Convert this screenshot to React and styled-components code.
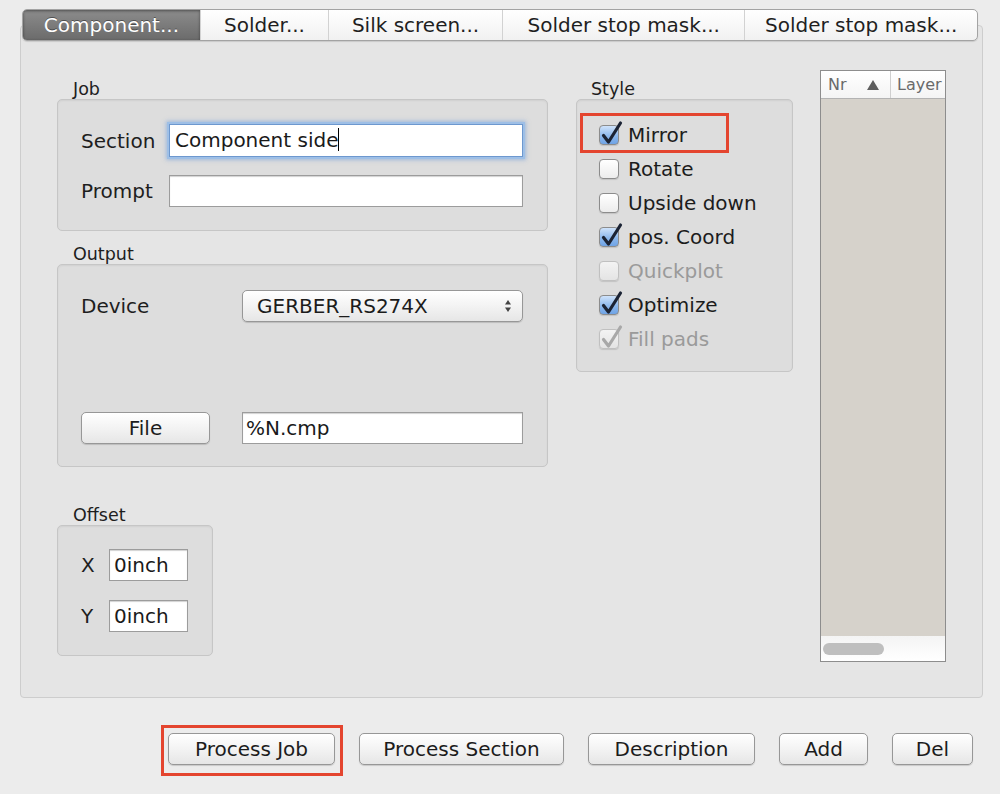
import React from "react"
import styled, { createGlobalStyle, css } from "styled-components"

const GlobalStyle = createGlobalStyle`
  html, body {
    margin: 0;
    padding: 0;
    background: #ececec;
  }
  body {
    font-family: "DejaVu Sans", "Liberation Sans", sans-serif;
    color: #1a1a1a;
  }
`

const Window = styled.div`
  width: 1000px;
  height: 794px;
  box-sizing: border-box;
  padding: 9px 17px 0 20px;
  overflow: hidden;
`

const TabBar = styled.div`
  position: relative;
  z-index: 1;
  display: flex;
  height: 32px;
  margin: 0 5px 0 2px;
  box-sizing: border-box;
  border: 1px solid #a3a3a3;
  border-radius: 5px;
  overflow: hidden;
  background: linear-gradient(#ffffff, #f1f1f1);
  box-shadow: 0 1px 1px rgba(0, 0, 0, 0.12);
`

const Tab = styled.div`
  width: ${p => p.$w}px;
  display: flex;
  align-items: center;
  justify-content: center;
  font-size: 20px;
  color: #1f1f1f;
  position: relative;
  ${p => p.$active && css`
    background: linear-gradient(#8c8c8c, #6b6b6b);
    color: #ffffff;
    text-shadow: 0 -1px 0 rgba(0, 0, 0, 0.4);
    box-shadow: inset 0 1px 3px rgba(0, 0, 0, 0.45);
  `}
  & + & {
    border-left: 1px solid #d2d2d2;
  }
`

const Panel = styled.div`
  margin-top: -16px;
  width: 963px;
  height: 673px;
  box-sizing: border-box;
  border: 1px solid #cdcdcd;
  border-radius: 4px;
  background: #e5e5e5;
  display: flex;
  align-items: flex-start;
  padding: 44px 0 0 36px;
`

const LeftColumn = styled.div`
  width: 491px;
  margin-top: 9px;
  display: flex;
  flex-direction: column;
`

const Group = styled.div`
  margin-top: ${p => p.$top || 0}px;
`

const GroupLabel = styled.div`
  font-size: 17.5px;
  line-height: 20px;
  height: 20px;
  padding-left: ${p => p.$indent || 16}px;
  color: #1e1e1e;
`

const GroupBox = styled.div`
  box-sizing: border-box;
  width: ${p => p.$w ? `${p.$w}px` : "100%"};
  height: ${p => p.$h}px;
  border: 1px solid #c6c6c6;
  border-radius: 5px;
  background: #dddddd;
  box-shadow: inset 0 1px 2px rgba(0, 0, 0, 0.06);
`

const JobBox = styled(GroupBox)`
  display: grid;
  grid-template-columns: 88px 1fr;
  row-gap: 18px;
  align-items: center;
  align-content: start;
  padding: 24px 24px 0 23px;
`

const OutputBox = styled(GroupBox)`
  display: grid;
  grid-template-columns: 161px 1fr;
  row-gap: 90px;
  align-items: center;
  align-content: start;
  padding: 25px 24px 0 23px;
`

const OffsetBox = styled(GroupBox)`
  display: grid;
  grid-template-columns: 28px 79px;
  row-gap: 19px;
  align-items: center;
  align-content: start;
  padding: 23px 0 0 23px;
`

const Label = styled.div`
  font-size: 20px;
  color: #1e1e1e;
`

const Field = styled.div`
  box-sizing: border-box;
  height: ${p => p.$h || 32}px;
  background: #ffffff;
  border: 1px solid #9c9c9c;
  box-shadow: inset 0 1px 1px rgba(0, 0, 0, 0.18);
  font-size: 20px;
  line-height: ${p => (p.$h || 32) - 2}px;
  padding-left: ${p => p.$pad || 5}px;
  white-space: nowrap;
  overflow: hidden;
  ${p => p.$focused && css`
    border-color: #6d98cf;
    box-shadow: 0 0 0 2px #9ebfe6, 0 0 4px 3px rgba(110, 155, 215, 0.55);
  `}
`

const Caret = styled.span`
  display: inline-block;
  width: 1px;
  height: 23px;
  background: #000;
  vertical-align: -4px;
`

const PushButton = styled.div`
  box-sizing: border-box;
  height: 32px;
  width: ${p => p.$w}px;
  border: 1px solid #979797;
  border-radius: 5px;
  background: linear-gradient(#ffffff, #f3f3f3 50%, #e6e6e6);
  box-shadow: 0 1px 1px rgba(0, 0, 0, 0.15);
  display: flex;
  align-items: center;
  justify-content: center;
  font-size: 20px;
  color: #1c1c1c;
`

const Select = styled(PushButton)`
  width: 100%;
  justify-content: space-between;
  padding: 0 10px 0 14px;
`

const StyleColumn = styled.div`
  width: 217px;
  margin: 9px 0 0 28px;
`

const StyleBox = styled(GroupBox)`
  padding: 18px 0 0 22px;
`

const CheckRow = styled.div`
  position: relative;
  height: 34px;
  display: flex;
  align-items: center;
  gap: 9px;
  font-size: 20px;
  color: ${p => p.$disabled ? "#9a9a9a" : "#1c1c1c"};
`

const Box = styled.span`
  position: relative;
  width: 20px;
  height: 20px;
  box-sizing: border-box;
  border-radius: 4px;
  border: 1px solid ${p => p.$disabled ? "#c0c0c0" : "#8c8c8c"};
  background: ${p => p.$checked && !p.$disabled
    ? "linear-gradient(#cfe3fb, #8db8ec 55%, #6fa4e6)"
    : p.$disabled ? "linear-gradient(#f3f3f3, #e4e4e4)" : "linear-gradient(#ffffff, #ececec)"};
  box-shadow: 0 1px 1px rgba(0, 0, 0, 0.12);
  flex-shrink: 0;
  svg {
    position: absolute;
    left: 0;
    top: 0;
    overflow: visible;
  }
`

const Highlight = styled.span`
  position: absolute;
  left: -19px;
  top: -5px;
  width: 149px;
  height: 40px;
  box-sizing: border-box;
  border: 3px solid #e4452f;
  pointer-events: none;
`

const LayerList = styled.div`
  margin-left: 27px;
  width: 126px;
  height: 592px;
  box-sizing: border-box;
  border: 1px solid #8d8d8d;
  background: #d6d2cb;
  display: flex;
  flex-direction: column;
`

const ListHeader = styled.div`
  height: 27px;
  background: linear-gradient(#ffffff, #f4f4f4);
  border-bottom: 1px solid #b3b3b3;
  display: flex;
  align-items: center;
  font-size: 16px;
  color: #6a6a6a;
  padding-left: 7px;
  white-space: nowrap;
  overflow: hidden;
`

const HeaderCell = styled.span`
  display: flex;
  align-items: center;
  width: ${p => p.$w}px;
  height: 100%;
  ${p => p.$sep && css`
    border-left: 1px solid #cfcfcf;
    padding-left: 6px;
  `}
`

const SortMark = styled.span`
  margin-left: 19px;
  display: flex;
`

const ListBody = styled.div`
  flex: 1;
`

const HScroll = styled.div`
  height: 25px;
  background: linear-gradient(#f4f4f4, #ffffff);
  display: flex;
  align-items: center;
  padding-left: 2px;
`

const ScrollThumb = styled.div`
  width: 61px;
  height: 12px;
  border-radius: 6px;
  background: #bfbfbf;
`

const ButtonRow = styled.div`
  display: flex;
  justify-content: flex-end;
  gap: 24px;
  margin: 35px 10px 0 0;
`

const Marked = styled.div`
  position: relative;
`

const Outline = styled.span`
  position: absolute;
  left: -7px;
  top: -8px;
  width: 182px;
  height: 51px;
  box-sizing: border-box;
  border: 3px solid #e4452f;
  pointer-events: none;
`

const Check = ({ checked, disabled }) => (
  <Box $checked={checked} $disabled={disabled}>
    {checked && (
      <svg width="20" height="20" viewBox="0 0 20 20">
        <path
          d="M3.5 9.5 L8.5 16 L20.5 -3"
          fill="none"
          stroke={disabled ? "#a8a8a8" : "#1b2334"}
          strokeWidth="3.2"
          strokeLinecap="round"
          strokeLinejoin="round"
        />
      </svg>
    )}
  </Box>
)

const SelectArrows = () => (
  <svg width="8" height="14" viewBox="0 0 8 14">
    <path d="M4 1 L7 5.5 H1 Z" fill="#444" />
    <path d="M4 13 L7 8.5 H1 Z" fill="#444" />
  </svg>
)

const SortArrow = () => (
  <svg width="14" height="12" viewBox="0 0 14 12">
    <path d="M7 1 L13 11 H1 Z" fill="#5e5e5e" />
  </svg>
)

const tabs = [
  { label: "Component...", w: 178, active: true },
  { label: "Solder...", w: 128 },
  { label: "Silk screen...", w: 174 },
  { label: "Solder stop mask...", w: 243 },
  { label: "Solder stop mask...", w: 233 },
]

const styles = [
  { label: "Mirror", checked: true, marked: true },
  { label: "Rotate" },
  { label: "Upside down" },
  { label: "pos. Coord", checked: true },
  { label: "Quickplot", disabled: true },
  { label: "Optimize", checked: true },
  { label: "Fill pads", checked: true, disabled: true },
]

const buttons = [
  { label: "Process Job", w: 167, marked: true },
  { label: "Process Section", w: 205 },
  { label: "Description", w: 167 },
  { label: "Add", w: 89 },
  { label: "Del", w: 81 },
]

const App = () => {
  return (
    <Window>
      <GlobalStyle />
      <TabBar>
        {tabs.map((t, i) => (
          <Tab key={i} $w={t.w} $active={t.active}>{t.label}</Tab>
        ))}
      </TabBar>

      <Panel>
        <LeftColumn>
          <Group>
            <GroupLabel>Job</GroupLabel>
            <JobBox $h={132}>
              <Label>Section</Label>
              <Field $focused $h={33}>Component side<Caret /></Field>
              <Label>Prompt</Label>
              <Field />
            </JobBox>
          </Group>

          <Group $top={13}>
            <GroupLabel>Output</GroupLabel>
            <OutputBox $h={203}>
              <Label>Device</Label>
              <Select>
                <span>GERBER_RS274X</span>
                <SelectArrows />
              </Select>
              <PushButton $w={129}>File</PushButton>
              <Field $pad={3}>%N.cmp</Field>
            </OutputBox>
          </Group>

          <Group $top={38}>
            <GroupLabel>Offset</GroupLabel>
            <OffsetBox $w={156} $h={131}>
              <Label>X</Label>
              <Field $pad={4}>0inch</Field>
              <Label>Y</Label>
              <Field $pad={4}>0inch</Field>
            </OffsetBox>
          </Group>
        </LeftColumn>

        <StyleColumn>
          <GroupLabel $indent={15}>Style</GroupLabel>
          <StyleBox $h={273}>
            {styles.map(s => (
              <CheckRow key={s.label} $disabled={s.disabled}>
                {s.marked && <Highlight />}
                <Check checked={s.checked} disabled={s.disabled} />
                {s.label}
              </CheckRow>
            ))}
          </StyleBox>
        </StyleColumn>

        <LayerList>
          <ListHeader>
            <HeaderCell $w={62}>
              Nr
              <SortMark><SortArrow /></SortMark>
            </HeaderCell>
            <HeaderCell $sep>Layer</HeaderCell>
          </ListHeader>
          <ListBody />
          <HScroll>
            <ScrollThumb />
          </HScroll>
        </LayerList>
      </Panel>

      <ButtonRow>
        {buttons.map(b => (
          b.marked ? (
            <Marked key={b.label}>
              <Outline />
              <PushButton $w={b.w}>{b.label}</PushButton>
            </Marked>
          ) : (
            <PushButton key={b.label} $w={b.w}>{b.label}</PushButton>
          )
        ))}
      </ButtonRow>
    </Window>
  )
}

export default App
